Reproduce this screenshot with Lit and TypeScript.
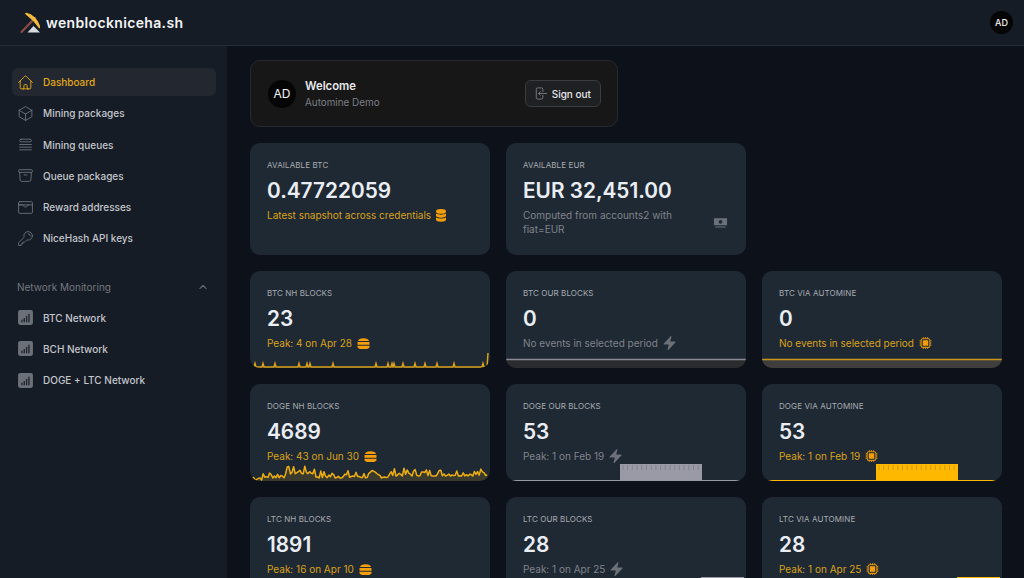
import {LitElement, html, css, svg} from 'lit';
import {customElement} from 'lit/decorators.js';

const icon = (d: string) => html`<svg class="ico" viewBox="0 0 24 24" fill="none" stroke="currentColor" stroke-width="1.3" stroke-linecap="round" stroke-linejoin="round"><path d=${d}></path></svg>`;

const signal = html`<svg class="ico" viewBox="0 0 16 16"><rect x="1" y="1" width="14" height="14" rx="2" fill="#6b7079"></rect><rect x="4" y="10" width="1.3" height="2.5" fill="#23272f"></rect><rect x="6.2" y="8.5" width="1.3" height="4" fill="#23272f"></rect><rect x="8.4" y="6.5" width="1.3" height="6" fill="#23272f"></rect><rect x="10.6" y="4.5" width="1.3" height="8" fill="#23272f"></rect></svg>`;

const coins = html`<svg class="tall" viewBox="0 0 10 13" fill="#f59e0b"><ellipse cx="5" cy="2.4" rx="5" ry="2.3"></ellipse><path d="M0 4.300c1 1 2.900 1.400 5 1.400s4-.4 5-1.400v2.200c0 1.300-2.200 2.200-5 2.200s-5-.9-5-2.200Z"></path><path d="M0 8.200c1 1 2.900 1.400 5 1.400s4-.4 5-1.400v2.300c0 1.300-2.200 2.300-5 2.300s-5-1-5-2.300Z"></path></svg>`;

const stack = html`<svg class="wide" viewBox="0 0 13 11" fill="#f59e0b"><path d="M1 3.100C1 1.300 3.400.2 6.500.2S12 1.300 12 3.100Z"></path><rect x=".5" y="4" width="12" height="2.800" rx=".6"></rect><path d="M.5 7.700h12v1.400c0 1.100-1.500 1.800-3 1.800h-6c-1.500 0-3-.7-3-1.800Z"></path></svg>`;

const bolt = html`<svg class="mini" viewBox="3 1.400 18 21" fill="#6b7079"><path d="M14.615 1.595a.75.75 0 0 1 .359.852L12.982 9.75h7.268a.75.75 0 0 1 .548 1.262l-10.5 11.25a.75.75 0 0 1-1.272-.71l1.992-7.302H3.750a.75.75 0 0 1-.548-1.262l10.5-11.250a.75.75 0 0 1 .913-.143Z"></path></svg>`;

const chip = html`<svg class="mini" viewBox="0 0 24 24"><path d="M8 1v4M12 1v4M16 1v4M8 19v4M12 19v4M16 19v4M1 8h4M1 12h4M1 16h4M19 8h4M19 12h4M19 16h4" stroke="#d9920f" stroke-width="1.8"></path><rect x="4" y="4" width="16" height="16" rx="3" fill="#1f2933" stroke="#d9920f" stroke-width="2"></rect><rect x="7" y="7" width="10" height="10" rx="1" fill="#f59e0b"></rect></svg>`;

const banknote = html`<svg class="note" viewBox="0 0 16 16" fill="#6b7079"><path d="M1 3.500h14v7.500H1Z"></path><circle cx="8" cy="7.200" r="2" fill="#1f2933"></circle><path d="M2.500 12.200h11v1h-11Z"></path></svg>`;

const nav = [
  {label: 'Dashboard', active: true, d: 'M2.25 12l8.954-8.955c.44-.439 1.152-.439 1.591 0L21.75 12M4.5 9.75v10.125c0 .621.504 1.125 1.125 1.125H9.75v-4.875c0-.621.504-1.125 1.125-1.125h2.250c.621 0 1.125.504 1.125 1.125V21h4.125c.621 0 1.125-.504 1.125-1.125V9.750M8.250 21h8.250'},
  {label: 'Mining packages', d: 'M21 7.500l-9-5.250L3 7.500m18 0l-9 5.250m9-5.250v9l-9 5.250M3 7.500l9 5.250M3 7.500v9l9 5.250m0-9v9'},
  {label: 'Mining queues', d: 'M3.750 12h16.500m-16.500 3.750h16.500M3.750 19.500h16.500M5.625 4.500h12.750a1.875 1.875 0 0 1 0 3.750H5.625a1.875 1.875 0 0 1 0-3.750Z'},
  {label: 'Queue packages', d: 'M20.250 7.500l-.625 10.632a2.250 2.250 0 0 1-2.247 2.118H6.622a2.250 2.250 0 0 1-2.247-2.118L3.750 7.500M10 11.250h4M3.375 7.500h17.250c.621 0 1.125-.504 1.125-1.125v-1.500c0-.621-.504-1.125-1.125-1.125H3.375c-.621 0-1.125.504-1.125 1.125v1.500c0 .621.504 1.125 1.125 1.125Z'},
  {label: 'Reward addresses', d: 'M3.750 3.750h16.500a1.500 1.500 0 0 1 1.500 1.500v13.500a1.500 1.500 0 0 1-1.500 1.500H3.750a1.500 1.500 0 0 1-1.500-1.500V5.250a1.500 1.500 0 0 1 1.500-1.500ZM2.250 8.250h19.500M2.250 8.250l5.250 0a2 2 0 0 1 1.800 1.100l.4.800a2 2 0 0 0 1.800 1.100h1a2 2 0 0 0 1.800-1.100l.4-.800a2 2 0 0 1 1.800-1.100'},
  {label: 'NiceHash API keys', d: 'M15.750 5.250a3 3 0 0 1 3 3m3 0a6 6 0 0 1-7.029 5.912c-.563-.097-1.159.026-1.563.430L10.500 17.250H8.250v2.250H6v2.250H2.250v-2.818c0-.597.237-1.170.659-1.591l6.499-6.499c.404-.404.527-1 .430-1.563A6 6 0 1 1 21.750 8.250Z'},
];

const networks = ['BTC Network', 'BCH Network', 'DOGE + LTC Network'];

// spikes along the bottom of the BTC card
const spikes = [5, 13, 25, 49, 57, 60, 83, 126, 138, 142, 144, 153, 165, 175, 187, 204, 233];
const spikeLine = (base: number, peak: number, xs: number[]) => {
  let d = `M1 ${base}`;
  xs.forEach((x) => {
    d += ` L${x - 1} ${base} L${x} ${peak} L${x + 1} ${base}`;
  });
  return d + ` L237 ${base}`;
};

// noisy line for the doge card, seeded so that it stays the same
const noise = (seed: number, base: number, amp: number) => {
  let s = seed;
  let d = `M1 ${base}`;
  for (let x = 2; x <= 238; x += 1.6) {
    s = (s * 9301 + 49297) % 233280;
    const hump = x > 35 && x < 65 ? 5 : x > 140 ? 3 : x < 15 ? -1 : 1;
    const r = s / 233280;
    const y = base - hump - r * r * amp;
    d += ` L${x} ${y.toFixed(1)}`;
  }
  return d;
};

const ticks = (x0: number, x1: number) => {
  let d = '';
  for (let x = x0 + 3; x < x1; x += 4.7) d += `M${x.toFixed(1)} 14V19`;
  return d;
};

const chart = (line: string, stroke: string, fill: string, width = 1.5) => html`<svg class="chart" viewBox="0 0 240 30">
  ${svg`<path d=${line + ' L238 30 L1 30 Z'} fill=${fill}></path><path d=${line} fill="none" stroke=${stroke} stroke-width=${width} stroke-linejoin="round"></path>`}
</svg>`;

const flat = (stroke: string, fill: string) => html`<svg class="chart" viewBox="0 0 240 30">
  ${svg`<rect x="0" y="21" width="240" height="9" fill=${fill}></rect><path d="M0 21.500H240" stroke=${stroke} stroke-width="1.500"></path>`}
</svg>`;

const block = (x0: number, x1: number, color: string, tick: string) => html`<svg class="chart" viewBox="0 0 240 30">
  ${svg`<path d="M2 29.500H238" stroke=${color} stroke-width="1"></path><rect x=${x0} y="13" width=${x1 - x0} height="17" fill=${color}></rect><path d=${ticks(x0, x1)} stroke=${tick} stroke-width=".8"></path>`}
</svg>`;

const GOLD = '#eeae12';
const GREY = '#9a9aa6';

const cards = [
  {label: 'BTC NH Blocks', value: '23', sub: 'Peak: 4 on Apr 28', tone: 'gold', mark: stack, plot: html`<svg class="chart" viewBox="0 0 240 30">${svg`<path d=${spikeLine(29, 25.500, spikes) + ' L238 15'} fill="none" stroke="#d9a21b" stroke-width="1.500"></path>`}</svg>`},
  {label: 'BTC Our Blocks', value: '0', sub: 'No events in selected period', tone: 'grey', mark: bolt, plot: flat('#8a8a94', '#2a2c2e')},
  {label: 'BTC via Automine', value: '0', sub: 'No events in selected period', tone: 'gold', mark: chip, plot: flat('#c9961a', '#3e3f3c')},
  {label: 'DOGE NH Blocks', value: '4689', sub: 'Peak: 43 on Jun 30', tone: 'gold', mark: stack, plot: chart(noise(7, 28, 8), GOLD, 'rgba(229,169,19,.14)')},
  {label: 'DOGE Our Blocks', value: '53', sub: 'Peak: 1 on Feb 19', tone: 'grey', mark: bolt, plot: block(114, 196, GREY, '#7d7d88')},
  {label: 'DOGE via Automine', value: '53', sub: 'Peak: 1 on Feb 19', tone: 'gold', mark: chip, plot: block(114, 196, '#ffb800', '#c79312')},
  {label: 'LTC NH Blocks', value: '1891', sub: 'Peak: 16 on Apr 10', tone: 'gold', mark: stack, plot: ''},
  {label: 'LTC Our Blocks', value: '28', sub: 'Peak: 1 on Apr 25', tone: 'grey', mark: bolt, plot: block(195, 238, GREY, '#7d7d88')},
  {label: 'LTC via Automine', value: '28', sub: 'Peak: 1 on Apr 25', tone: 'gold', mark: chip, plot: block(195, 238, '#ffb800', '#c79312')},
];

@customElement('app-root')
export class AppRoot extends LitElement {
  static styles = css`
    :host {
      display: flex;
      flex-direction: column;
      height: 100vh;
      overflow: hidden;
      background: #0d1119;
      color: #e5e7eb;
      font-family: Inter, "Liberation Sans", sans-serif;
    }
    .top {
      flex: none;
      height: 45px;
      display: flex;
      align-items: center;
      justify-content: space-between;
      padding: 0 11px 0 20px;
      background: #161c26;
      border-bottom: 1px solid #262c36;
    }
    .brand {
      display: flex;
      align-items: center;
      gap: 6px;
      font-size: 14px;
      font-weight: 600;
      letter-spacing: 0.35px;
      color: #f3f4f6;
    }
    .brand svg {
      width: 20px;
      height: 22px;
    }
    .avatar {
      display: flex;
      align-items: center;
      justify-content: center;
      border-radius: 50%;
      background: #050505;
      color: #f3f4f6;
    }
    .top .avatar {
      width: 23px;
      height: 23px;
      font-size: 9px;
      font-weight: 500;
    }
    .body {
      flex: 1;
      display: flex;
      min-height: 0;
    }
    .side {
      flex: none;
      width: 227px;
      box-sizing: border-box;
      padding: 22px 11px 0 12px;
      background: #161c26;
      display: flex;
      flex-direction: column;
      gap: 3.3px;
    }
    .item {
      height: 28px;
      display: flex;
      align-items: center;
      gap: 9px;
      padding: 0 5px;
      border-radius: 6px;
      font-size: 10px;
      font-weight: 500;
      color: #c3c6cc;
    }
    .item.on {
      background: #23272f;
      color: #e0a81a;
    }
    .item .ico {
      width: 17px;
      height: 17px;
      flex: none;
      color: #6b7079;
    }
    .item.on .ico {
      color: #e0a81a;
    }
    .group {
      display: flex;
      align-items: center;
      justify-content: space-between;
      margin-top: 17.5px;
      height: 27px;
      padding: 0 8px 0 5px;
      font-size: 10px;
      color: #73777f;
    }
    .group svg {
      width: 10px;
      height: 10px;
      color: #6b7079;
    }
    .main {
      flex: 1;
      min-width: 0;
      overflow: hidden;
      box-sizing: border-box;
      padding: 14px 22px 0 23px;
      display: flex;
      flex-direction: column;
      gap: 16px;
    }
    .welcome {
      flex: none;
      width: 368px;
      height: 67px;
      box-sizing: border-box;
      display: flex;
      align-items: center;
      justify-content: space-between;
      padding: 0 16px 0 17px;
      background: #171717;
      border: 1px solid #262a30;
      border-radius: 10px;
    }
    .who {
      display: flex;
      align-items: center;
      gap: 9px;
    }
    .who .avatar {
      width: 28px;
      height: 28px;
      font-size: 12px;
    }
    .who b {
      display: block;
      font-size: 11.3px;
      font-weight: 600;
      line-height: 16px;
      color: #e8e9ec;
    }
    .who span.name {
      display: block;
      font-size: 9.9px;
      line-height: 16px;
      color: #7c7f86;
    }
    .out {
      display: flex;
      align-items: center;
      gap: 4px;
      height: 27px;
      box-sizing: border-box;
      padding: 0 9px 0 7px;
      border: 1px solid #3a3c40;
      border-radius: 6px;
      background: #1f2022;
      font-size: 10px;
      font-weight: 500;
      color: #e5e7eb;
    }
    .out svg {
      width: 15px;
      height: 15px;
      color: #85888e;
    }
    .grid {
      display: grid;
      grid-template-columns: repeat(3, 240px);
      gap: 16px;
    }
    .card {
      position: relative;
      overflow: hidden;
      box-sizing: border-box;
      height: 97px;
      padding: 17px 18px 0 17px;
      border-radius: 10px;
      background: #1f2933;
    }
    .card.big {
      height: 112px;
    }
    .label {
      font-size: 8px;
      line-height: 10px;
      letter-spacing: 0.1px;
      text-transform: uppercase;
      color: #a7abb2;
    }
    .value {
      margin-top: 7px;
      font-size: 20.8px;
      font-weight: 600;
      line-height: 28px;
      color: #eaeef4;
    }
    .sub {
      position: relative;
      z-index: 1;
      display: flex;
      align-items: center;
      gap: 5px;
      margin-top: 3px;
      font-size: 10px;
      line-height: 14px;
      color: #7f838b;
    }
    .sub.gold {
      color: #d9a21b;
    }
    .sub.split {
      justify-content: space-between;
    }
    .sub.split span {
      width: 165px;
    }
    .mini {
      width: 13px;
      height: 14px;
      flex: none;
    }
    .tall {
      width: 10px;
      height: 13px;
      flex: none;
    }
    .wide {
      width: 13px;
      height: 11px;
      flex: none;
    }
    .note {
      width: 15px;
      height: 15px;
      flex: none;
    }
    .chart {
      position: absolute;
      left: 0;
      bottom: 0;
      width: 240px;
      height: 30px;
      display: block;
    }
  `;

  render() {
    return html`
      <header class="top">
        <div class="brand">
          <svg viewBox="0 0 20 22">
            <path d="M1.500 20 L15 6" stroke="#8a4b45" stroke-width="2.200" stroke-linecap="round"></path>
            <path d="M7.500 20.500 L13.500 14 L20 20.500 Z" fill="#d7dbe0"></path>
            <path d="M6 1.500 C12 2.500 18 8 19.500 15.500 C16 10.500 12 6 6 1.500 Z" fill="#f2bd3c" stroke="#f2bd3c" stroke-width="1.600" stroke-linejoin="round"></path>
          </svg>
          wenblockniceha.sh
        </div>
        <div class="avatar">AD</div>
      </header>
      <div class="body">
        <nav class="side">
          ${nav.map((n) => html`<div class="item ${n.active ? 'on' : ''}">${icon(n.d)}${n.label}</div>`)}
          <div class="group">
            Network Monitoring
            <svg viewBox="0 0 24 24" fill="none" stroke="currentColor" stroke-width="2.500" stroke-linecap="round" stroke-linejoin="round"><path d="M4.500 15.750l7.500-7.500 7.500 7.500"></path></svg>
          </div>
          ${networks.map((n) => html`<div class="item">${signal}${n}</div>`)}
        </nav>
        <main class="main">
          <section class="welcome">
            <div class="who">
              <div class="avatar">AD</div>
              <div><b>Welcome</b><span class="name">Automine Demo</span></div>
            </div>
            <div class="out">
              ${icon('M15.750 9V5.250A2.250 2.250 0 0 0 13.500 3h-6a2.250 2.250 0 0 0-2.250 2.250v13.500A2.250 2.250 0 0 0 7.500 21h6a2.250 2.250 0 0 0 2.250-2.250V15M12 9l-3 3m0 0 3 3m-3-3h12.750')}
              Sign out
            </div>
          </section>
          <section class="grid">
            <div class="card big">
              <div class="label">Available BTC</div>
              <div class="value">0.47722059</div>
              <div class="sub gold">Latest snapshot across credentials ${coins}</div>
            </div>
            <div class="card big">
              <div class="label">Available EUR</div>
              <div class="value">EUR 32,451.00</div>
              <div class="sub split"><span>Computed from accounts2 with fiat=EUR</span>${banknote}</div>
            </div>
            <div></div>
            ${cards.map((c) => html`
              <div class="card">
                <div class="label">${c.label}</div>
                <div class="value">${c.value}</div>
                <div class="sub ${c.tone}">${c.sub} ${c.mark}</div>
                ${c.plot}
              </div>`)}
          </section>
        </main>
      </div>
    `;
  }
}
